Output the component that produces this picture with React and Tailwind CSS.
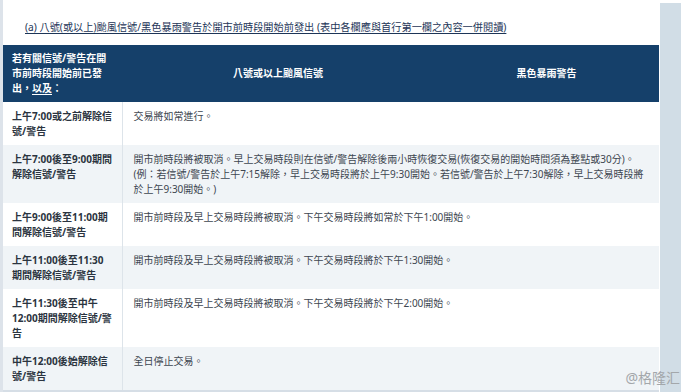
import React from "react";

const rows = [
  {
    when: ["上午7:00或之前解除信", "號/警告"],
    what: ["交易將如常進行。"],
  },
  {
    when: ["上午7:00後至9:00期間", "解除信號/警告"],
    what: [
      "開市前時段將被取消。早上交易時段則在信號/警告解除後兩小時恢復交易(恢復交易的開始時間須為整點或30分)。",
      "(例：若信號/警告於上午7:15解除，早上交易時段將於上午9:30開始。若信號/警告於上午7:30解除，早上交易時段將",
      "於上午9:30開始。)",
    ],
  },
  {
    when: ["上午9:00後至11:00期", "間解除信號/警告"],
    what: ["開市前時段及早上交易時段將被取消。下午交易時段將如常於下午1:00開始。"],
  },
  {
    when: ["上午11:00後至11:30", "期間解除信號/警告"],
    what: ["開市前時段及早上交易時段將被取消。下午交易時段將於下午1:30開始。"],
  },
  {
    when: ["上午11:30後至中午", "12:00期間解除信號/警", "告"],
    what: ["開市前時段及早上交易時段將被取消。下午交易時段將於下午2:00開始。"],
  },
  {
    when: ["中午12:00後始解除信", "號/警告"],
    what: ["全日停止交易。"],
  },
];

function Lines({ items }) {
  return items.map((t, i) => (
    <span key={i} className="block whitespace-nowrap">
      {t}
    </span>
  ));
}

export default function App() {
  return (
    <div className="relative flex w-[686px] h-[392px] overflow-hidden bg-white font-['Noto_Sans','Noto_Sans_CJK_TC',sans-serif]">
      <div className="w-[3px] shrink-0 bg-[#dde3ea]" />

      <div className="flex w-[656px] shrink-0 flex-col">
        <div className="flex h-[45px] items-center pl-[22px] pt-[9px]">
          <span className="text-[10.2px] leading-[15px] text-[#1d3557] underline underline-offset-[2px]">
            (a) 八號(或以上)颱風信號/黑色暴雨警告於開市前時段開始前發出 (表中各欄應與首行第一欄之內容一併閱讀)
          </span>
        </div>

        <table className="w-[656px] table-fixed border-collapse border-b-2 border-[#d6dee6] text-[10px] leading-[15px]">
          <colgroup>
            <col className="w-[119px]" />
            <col className="w-[312px]" />
            <col className="w-[225px]" />
          </colgroup>
          <thead>
            <tr className="bg-[#15406a] text-white font-bold">
              <th className="py-[6px] pl-[9px] pr-[6px] text-left align-top font-bold leading-[15px]">
                若有關信號/警告在開
                <br />
                市前時段開始前已發
                <br />
                出，<span className="underline underline-offset-[2px]">以及</span>：
              </th>
              <th className="text-center align-middle font-bold">八號或以上颱風信號</th>
              <th className="text-center align-middle font-bold">黑色暴雨警告</th>
            </tr>
          </thead>
          <tbody>
            {rows.map((r, i) => (
              <tr key={i} className={i % 2 === 1 ? "bg-[#f0f4f7]" : "bg-white"}>
                <td className="border-r border-[#dde4ea] py-[6.5px] pl-[9px] pr-[4px] align-top font-bold text-[#2b3440]">
                  <Lines items={r.when} />
                </td>
                <td colSpan={2} className="py-[6.5px] pl-[11px] pr-0 align-top text-[#3d4650]">
                  <Lines items={r.what} />
                </td>
              </tr>
            ))}
          </tbody>
        </table>
      </div>

      <div className="ml-[1px] mt-[3px] w-[21px] shrink-0 bg-[#d1dde6]" />

      <span className="absolute right-[6px] bottom-[7px] text-[14px] leading-none text-[#a3a7ab]">
        @格隆汇
      </span>
    </div>
  );
}
